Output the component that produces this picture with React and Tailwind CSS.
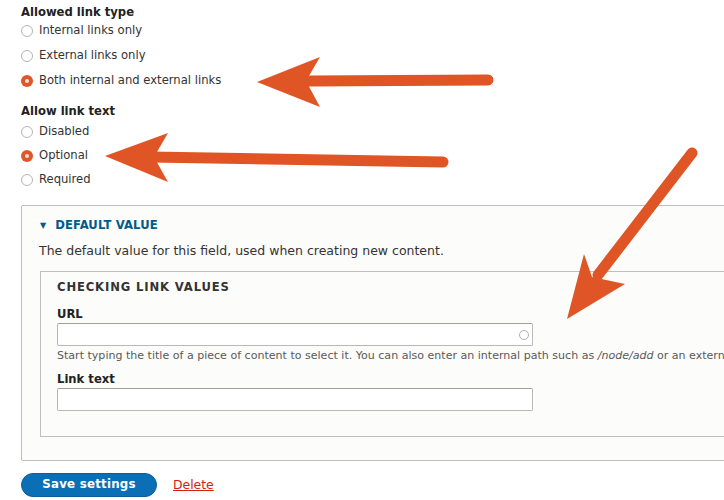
import React from "react"

const font = { fontFamily: '"DejaVu Sans", "Liberation Sans", sans-serif' }

function Radio({ label, checked }) {
  return (
    <div className="flex items-center h-[14px]">
      {checked ? (
        <span className="w-[12px] h-[12px] rounded-full bg-[#e0562b] flex items-center justify-center ml-[21px]">
          <span className="w-[4px] h-[4px] rounded-full bg-[#fbe3da]" />
        </span>
      ) : (
        <span className="w-[12px] h-[12px] rounded-full border border-[#b4b4b4] bg-white ml-[21px]" />
      )}
      <span className="ml-[6px] text-[11.6px] text-[#333]">{label}</span>
    </div>
  )
}

export default function App() {
  return (
    <div style={font} className="relative w-[724px] h-[500px] overflow-hidden bg-white pt-[2px]">
      {/* Allowed link type */}
      <div className="h-[20px] leading-[20px] pl-[21px] text-[11.6px] font-bold text-[#222]">
        Allowed link type
      </div>
      <div className="flex flex-col gap-[11px] mt-[2px]">
        <Radio label="Internal links only" />
        <Radio label="External links only" />
        <Radio label="Both internal and external links" checked />
      </div>

      {/* Allow link text */}
      <div className="h-[20px] leading-[20px] pl-[21px] text-[11.6px] font-bold text-[#222] mt-[13px]">
        Allow link text
      </div>
      <div className="flex flex-col gap-[10px] mt-[4px]">
        <Radio label="Disabled" />
        <Radio label="Optional" checked />
        <Radio label="Required" />
      </div>

      {/* Default value fieldset */}
      <div className="ml-[21px] mt-[18px] w-[760px] h-[256px] border border-[#bfbfbf] rounded-[2px] bg-[#fcfcfa]">
        <div className="flex items-center h-[18px] mt-[11px] pl-[18px]">
          <span className="text-[8px] text-[#005a8c]">▼</span>
          <span className="ml-[9px] text-[11.6px] font-bold text-[#005a8c] tracking-[0.01em]">DEFAULT VALUE</span>
        </div>
        <div className="h-[16px] leading-[16px] mt-[8px] pl-[17px] text-[12.5px] text-[#333]">
          The default value for this field, used when creating new content.
        </div>
        <div className="ml-[18px] mt-[12px] w-[760px] h-[166px] border border-[#bfbfbf] bg-[#fcfcfa]">
          <div className="h-[16px] leading-[16px] mt-[7px] pl-[16px] text-[11.6px] font-bold text-[#333] tracking-[0.075em]">
            CHECKING LINK VALUES
          </div>
          <div className="h-[16px] leading-[16px] mt-[11px] pl-[16px] text-[11.6px] font-bold text-[#222]">
            URL
          </div>
          <div className="ml-[16px] mt-[1px] w-[476px] h-[23px] border border-[#b8b8b8] border-t-[#a0a0a0] rounded-[2px] bg-white flex items-center justify-end pr-[3px]">
            <span className="w-[10px] h-[10px] rounded-full border border-[#b0b0b0]" />
          </div>
          <div className="h-[16px] leading-[16px] mt-[2px] pl-[16px] text-[11.05px] text-[#595959] whitespace-nowrap">
            Start typing the title of a piece of content to select it. You can also enter an internal path such as <em>/node/add</em> or an external URL such as <em>http://example.com</em>.
          </div>
          <div className="h-[16px] leading-[16px] mt-[7px] pl-[16px] text-[11.6px] font-bold text-[#222]">
            Link text
          </div>
          <div className="ml-[16px] mt-[1px] w-[476px] h-[23px] border border-[#b8b8b8] border-t-[#a0a0a0] rounded-[2px] bg-white" />
        </div>
      </div>

      {/* Actions */}
      <div className="flex items-center mt-[12px] ml-[21px]">
        <button className="w-[136px] h-[24px] rounded-full bg-[#0b6fb5] border border-[#0b5f9c] text-white text-[11.8px] font-bold tracking-[0.02em]">
          Save settings
        </button>
        <a href="#" className="ml-[16px] text-[12.4px] text-[#d4210f] underline">
          Delete
        </a>
      </div>

      {/* Annotation arrows */}
      <svg className="absolute left-0 top-0 pointer-events-none" width="724" height="500" viewBox="0 0 724 500">
        <g fill="#e05526" stroke="#e05526" strokeLinecap="round">
          <line x1="488" y1="80" x2="310" y2="81" strokeWidth="11" />
          <polygon points="257,82 320,57 306,81 320,107" stroke="none" />
          <line x1="443" y1="162" x2="150" y2="157" strokeWidth="11" />
          <polygon points="105,156 168,133 154,157 168,182" stroke="none" />
          <line x1="692" y1="153" x2="598" y2="275" strokeWidth="11" />
          <polygon points="567,319 584,254 592,277 625,284" stroke="none" />
        </g>
      </svg>
    </div>
  )
}
